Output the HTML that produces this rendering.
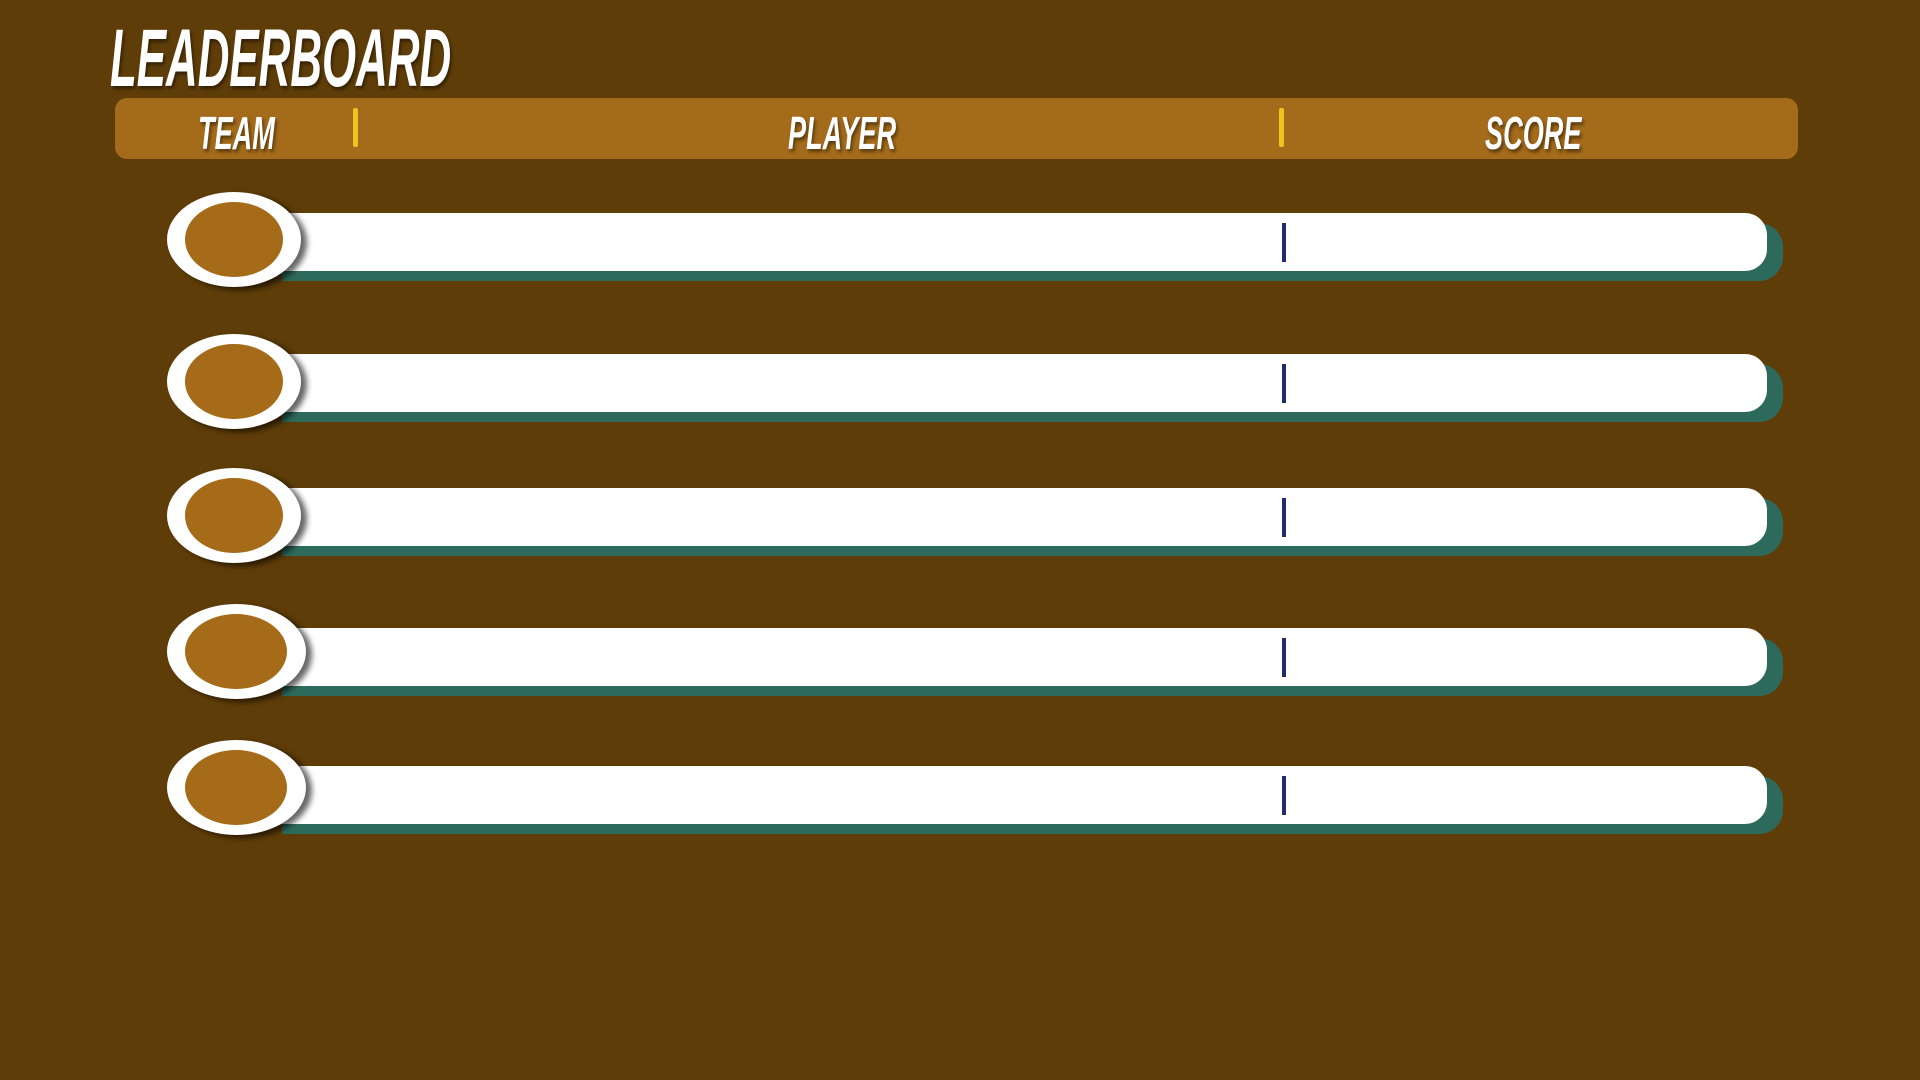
<!DOCTYPE html>
<html><head><meta charset="utf-8"><style>
html,body{margin:0;padding:0}
body{width:1920px;height:1080px;background:#5f3d08;position:relative;overflow:hidden;font-family:"Liberation Sans Narrow","Liberation Sans",sans-serif}
.t{position:absolute;color:#fff;font-weight:bold;font-style:italic;white-space:nowrap;transform-origin:left top;text-shadow:3px 3px 4px rgba(0,0,0,.45)}
.hdr{position:absolute;left:115px;top:98px;width:1683px;height:61px;background:#a36b1a;border-radius:12px}
.ydiv{position:absolute;top:108px;width:5px;height:39px;background:#f2c21e;border-radius:2px}
.sh{position:absolute;left:282px;width:1501px;height:58px;background:#2e6a5b;border-radius:0 24px 24px 0}
.bar{position:absolute;left:282px;width:1485px;height:58px;background:#fff;border-radius:0 22px 22px 0}
.nd{position:absolute;left:1282px;width:4px;height:39px;background:#1f2d6b}
.c{position:absolute;left:167px;width:134px;height:95px;border-radius:50%;background:#fff;box-shadow:6px 3px 6px rgba(0,0,0,.6)}
.c i{position:absolute;left:18px;top:10px;width:98px;height:75px;border-radius:50%;background:#a56b19}
</style></head><body>
<div class="t" style="left:110px;top:12px;font-size:82px;transform:scaleX(.535)">LEADERBOARD</div>
<div class="hdr"></div>
<div class="t" style="left:198px;top:106px;font-size:46px;transform:scaleX(.59)">TEAM</div>
<div class="t" style="left:788px;top:106px;font-size:46px;transform:scaleX(.59)">PLAYER</div>
<div class="t" style="left:1485px;top:106px;font-size:46px;transform:scaleX(.59)">SCORE</div>
<div class="ydiv" style="left:353px"></div>
<div class="ydiv" style="left:1279px"></div>

<div class="sh" style="top:223px"></div><div class="bar" style="top:213px"></div><div class="nd" style="top:223px"></div><div class="c" style="top:192px"><i></i></div>
<div class="sh" style="top:364px"></div><div class="bar" style="top:354px"></div><div class="nd" style="top:364px"></div><div class="c" style="top:334px"><i></i></div>
<div class="sh" style="top:498px"></div><div class="bar" style="top:488px"></div><div class="nd" style="top:498px"></div><div class="c" style="top:468px"><i></i></div>
<div class="sh" style="top:638px"></div><div class="bar" style="top:628px"></div><div class="nd" style="top:638px"></div><div class="c" style="top:604px;width:139px"><i style="width:102px"></i></div>
<div class="sh" style="top:776px"></div><div class="bar" style="top:766px"></div><div class="nd" style="top:776px"></div><div class="c" style="top:740px;width:139px"><i style="width:102px"></i></div>
</body></html>
